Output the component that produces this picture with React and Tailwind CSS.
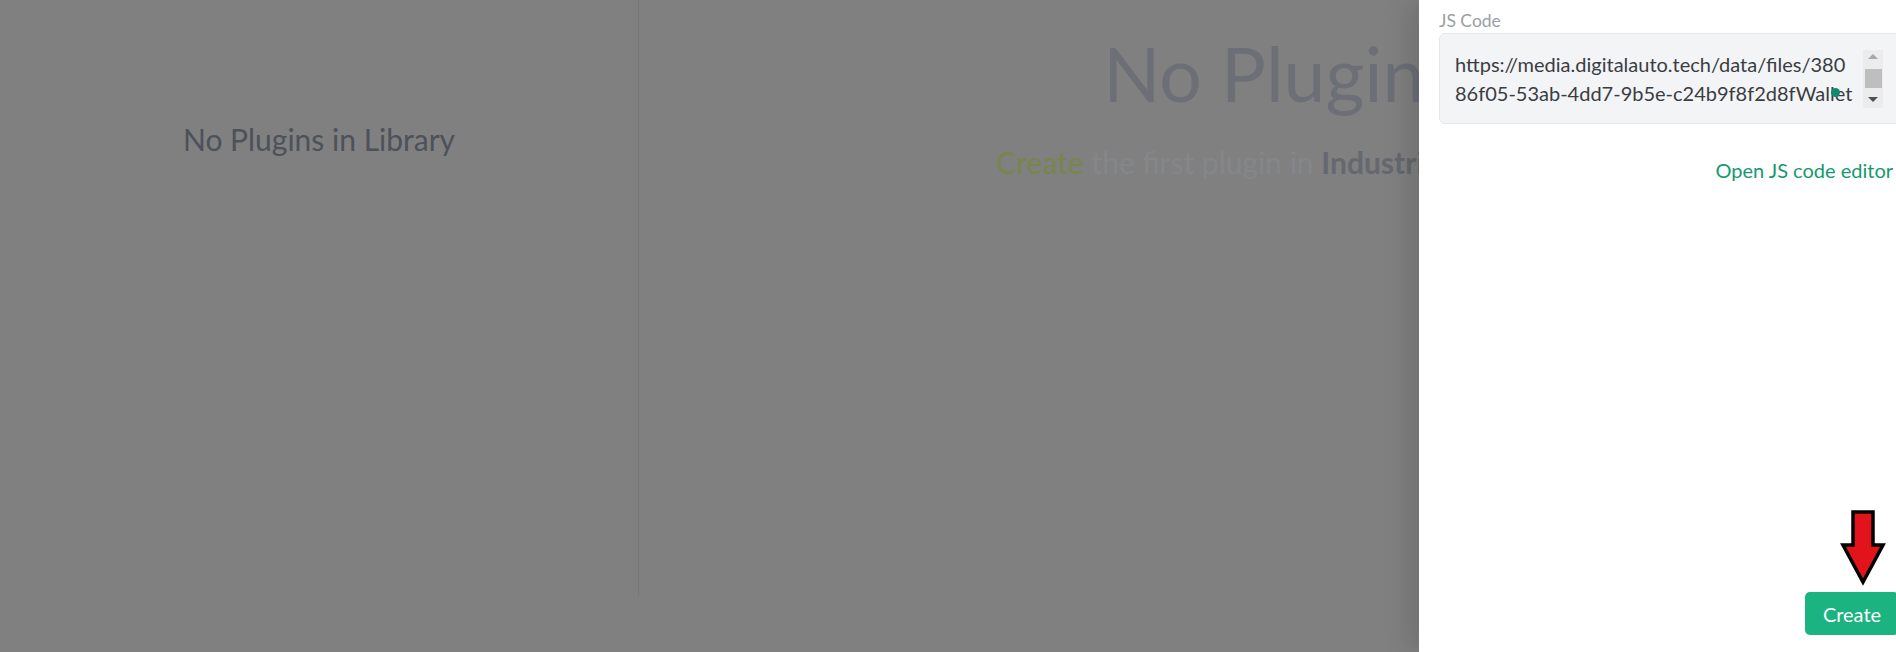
export default function App() {
  return (
    <div className="relative h-[652px] w-[1896px] overflow-hidden bg-[#808080] font-['Lato',sans-serif]">
      <div className="flex h-full w-full">
        <div className="h-[596px] w-[639px] flex-none border-r border-[#767676] pt-[121px] text-center">
          <div className="text-[30px] leading-[36px] text-[#4d5159]">No Plugins in Library</div>
        </div>
        <div className="flex flex-1 flex-col items-center pt-[36px]">
          <div className="pl-[25px] text-[75px] leading-[75px] text-[#6c6f76]">No Plugins</div>
          <div className="mt-[33px] pl-[2px] text-[30px] leading-[36px] text-[#84868b]">
            <span className="text-[#78854c]">Create</span> the first plugin in{" "}
            <span className="font-bold text-[#65686f]">Industrial Wallet</span>
          </div>
        </div>
      </div>

      <div className="absolute right-[-3px] top-0 flex h-full w-[480px] flex-col bg-white pl-5 pt-[8px] shadow-[-12px_0_24px_rgba(0,0,0,0.12)]">
        <div className="text-[17.5px] leading-[25px] text-[#9a9ea6]">JS Code</div>
        <div className="relative flex h-[91px] w-[470px] flex-none rounded-md border border-[#e5e7eb] bg-[#f3f4f6] pl-[15px] pt-[16px]">
          <div className="w-[408px] whitespace-nowrap text-[20px] leading-[29px] text-[#3a3d42]">
            <div>https://media.digitalauto.tech/data/files/380</div>
            <div>86f05-53ab-4dd7-9b5e-c24b9f8f2d8fWallet</div>
          </div>
          <div className="flex h-[58px] w-[20px] flex-col items-center bg-[#ececec]">
            <div className="mt-[4px] h-0 w-0 border-x-[5px] border-b-[5px] border-x-transparent border-b-[#a8a8a8]" />
            <div className="mt-[10px] h-[19px] w-[17px] bg-[#bebebe]" />
            <div className="mt-[9px] h-0 w-0 border-x-[5px] border-t-[5px] border-x-transparent border-t-[#505050]" />
          </div>
          <div className="absolute left-[391px] top-[54px] h-[9px] w-[9px] rounded-full bg-[#0f8a6c]" />
        </div>
        <div className="mt-[31px] flex justify-end pr-[6px]">
          <span className="text-[20px] leading-[30px] text-[#16996f]">Open JS code editor</span>
        </div>
        <div className="mt-auto mb-[17px] flex justify-end">
          <button className="h-[43px] w-[94px] rounded-[5px] bg-[#1bb37f] text-[20px] text-white">Create</button>
        </div>
      </div>

      <svg className="absolute left-[1840px] top-[509px]" width="46" height="77" viewBox="0 0 46 77">
        <polygon points="13,3 33,3 33,36 43,36 23,73 3,36 13,36" fill="#e3131b" stroke="#000" strokeWidth="3.5" strokeLinejoin="miter" />
      </svg>
    </div>
  );
}
